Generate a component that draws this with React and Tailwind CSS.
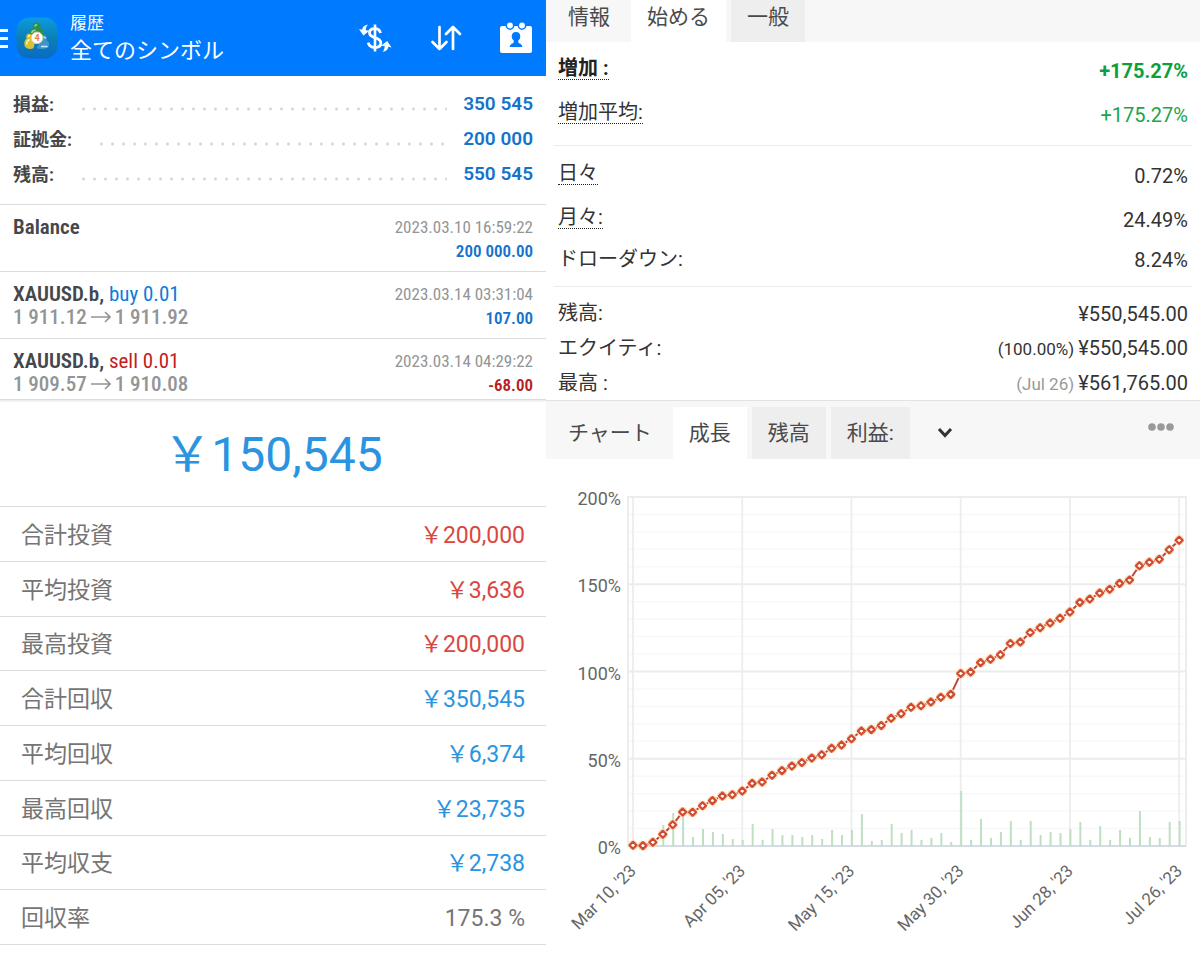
import { useState } from 'react';
import clsx from 'clsx';

const summary = [
    { label: '損益:', value: '350 545' },
    { label: '証拠金:', value: '200 000' },
    { label: '残高:', value: '550 545' },
];

const deals = [
    { id: 1, symbol: 'Balance', time: '2023.03.10 16:59:22', profit: '200 000.00' },
    { id: 2, symbol: 'XAUUSD.b,', side: 'buy', lot: '0.01', open: '1 911.12', close: '1 911.92', time: '2023.03.14 03:31:04', profit: '107.00' },
    { id: 3, symbol: 'XAUUSD.b,', side: 'sell', lot: '0.01', open: '1 909.57', close: '1 910.08', time: '2023.03.14 04:29:22', profit: '-68.00' },
];

// Full-width yen sign, the totals are set in the Japanese font's glyph
const YEN = '\uffe5';

const totals = [
    { label: '合計投資', value: `${YEN}200,000`, color: 'text-[#d9483f]' },
    { label: '平均投資', value: `${YEN}3,636`, color: 'text-[#d9483f]' },
    { label: '最高投資', value: `${YEN}200,000`, color: 'text-[#d9483f]' },
    { label: '合計回収', value: `${YEN}350,545`, color: 'text-[#2b94e1]' },
    { label: '平均回収', value: `${YEN}6,374`, color: 'text-[#2b94e1]' },
    { label: '最高回収', value: `${YEN}23,735`, color: 'text-[#2b94e1]' },
    { label: '平均収支', value: `${YEN}2,738`, color: 'text-[#2b94e1]' },
    { label: '回収率', value: '175.3 %', color: 'text-[#757575]' },
];

// Cumulative growth in percent, one value per trading day
const growth = [
    0.4, 0.2, 2.1, 6.7, 12.2, 19.5, 19.3, 23.1, 26, 28.7, 29.4, 31.5, 35.9, 36.7,
    40.5, 43.2, 45.8, 47.8, 50.4, 52.3, 56, 57.9, 61.5, 65.9, 66.7, 69, 73.2, 75.8,
    79.5, 80.4, 82.5, 85.2, 86.9, 98.8, 99.7, 105.1, 107, 109.6, 116, 116.9, 122.3,
    125.1, 127.8, 130.5, 134.1, 139.6, 141.5, 145, 147.1, 150.5, 152.4, 160.6,
    162.6, 164.3, 169.8, 175.2,
];

// Height of the daily profit bars
const daily = [
    0, 0, 0, 21, 33, 33, 9, 17, 14, 12, 7, 6, 22, 6, 17, 11, 11, 9, 11, 7, 16, 11,
    16, 32, 5, 6, 22, 13, 16, 6, 8, 13, 4, 55, 6, 27, 8, 14, 25, 6, 25, 11, 14, 13,
    17, 24, 6, 20, 6, 16, 8, 35, 9, 8, 24, 25,
];

const dates = ["Mar 10, '23", "Apr 05, '23", "May 15, '23", "May 30, '23", "Jun 28, '23", "Jul 26, '23"];

const CHART = { left: 82, right: 640, top: 38, bottom: 387, first: 87, step: 9.93 };

function AppLogo() {
    return (
        <svg viewBox="0 0 42 42" className="size-[42px] shrink-0" aria-hidden="true">
            <defs>
                <linearGradient id="logo-bg" x1="0" y1="0" x2="0" y2="1">
                    <stop offset="0" stopColor="#0c9be0" />
                    <stop offset="0.5" stopColor="#0a80b4" />
                    <stop offset="1" stopColor="#0a6ac6" />
                </linearGradient>
            </defs>
            <rect x="0.5" y="0.5" width="41" height="41" rx="13" fill="url(#logo-bg)" />
            <path d="M13.500 18c-.5-3.500 1-5.800 3.800-6.500a4 4 0 1 1 7 0c3 .7 4.300 3.200 3.800 6.500l-7 2z" fill="#2f8f4a" />
            <path d="M18.700 9.500c.3-1.200 1.200-1.800 2.400-1.800M15.500 16c.6-1.800 2-2.700 4-2.700" fill="none" stroke="#9fdc8d" strokeWidth="1.400" />
            <path d="M8.800 29.500c-1-3.500-.4-6.500 1.800-8-1-2.700.2-4.800 2.700-4.800 2.200 0 3.600 1.800 3.200 4l2.500 5-1.500 5.500c-3 1.500-7.200.8-8.700-1.700z" fill="#d6c233" />
            <path d="M10.800 27.500c-.2-2.300.8-4.200 2.800-5M12.500 20c0-1.200.5-1.800 1.400-1.800" fill="none" stroke="#fff3a0" strokeWidth="1.500" />
            <path d="M20.500 31l4-6.500c-.5-4 1.200-6.700 4-6.200 2.300.5 3 2.900 2 5 2.500 1.200 3.300 4 1.800 7.200-3.600 1.700-8 1.800-11.800.5z" fill="#3d94d0" />
            <path d="M25 29.500h6.500M27.500 20.500c1-.5 1.800 0 1.800 1" fill="none" stroke="#c7ecff" strokeWidth="1.500" />
            <circle cx="21" cy="20.800" r="5.800" fill="#fff" stroke="#d8d3a0" strokeWidth="1" />
            <text x="21" y="24" textAnchor="middle" fontSize="9" fontWeight="700" fill="#ea7c4a" fontFamily="Roboto, sans-serif">4</text>
        </svg>
    );
}

function CurrencyIcon() {
    return (
        <svg viewBox="0 0 34 30" className="h-[30px] w-[34px]" fill="none" stroke="#fff" aria-hidden="true">
            <path d="M22.500 10c-.8-3-3-4.300-5.700-4.300-3.200 0-5.300 1.600-5.300 4.100 0 2.900 2.300 3.900 5.300 4.900 3.400 1.100 6 2.300 6 5.300s-2.500 4.500-6 4.500c-3.400 0-5.700-1.500-6.600-4.800" strokeWidth="2.800" />
            <path d="M17 1.500v27" strokeWidth="2.600" />
            <path d="M10 1.500C6.500 2 4.500 4 4.100 6.700L1 6l4.300 6.500 6.200-4.800-3.700-.5C7.800 5 8.500 3 10 1.500z" fill="#fff" stroke="none" />
            <path d="M24.500 29c3.500-.5 5.500-2.500 5.900-5.200l3.100.7-4.300-6.500-6.200 4.800 3.700.5c0 2.200-.7 4.200-2.200 5.700z" fill="#fff" stroke="none" />
        </svg>
    );
}

function SortIcon() {
    return (
        <svg viewBox="0 0 32 28" className="h-7 w-8" fill="none" stroke="#fff" strokeWidth="2.700" strokeLinecap="round" strokeLinejoin="round" aria-hidden="true">
            <path d="M9.500 3v22M2.500 18l7 7 7-7" />
            <path d="M23 25V3M16 10l7-7 7 7" />
        </svg>
    );
}

function CalendarIcon() {
    return (
        <svg viewBox="0 0 32 32" className="size-8" aria-hidden="true">
            <rect x="0" y="4" width="32" height="27" rx="2" fill="#fff" />
            <circle cx="10" cy="3.500" r="4.400" fill="#007aff" />
            <circle cx="22" cy="3.500" r="4.400" fill="#007aff" />
            <circle cx="10" cy="3.500" r="2.900" fill="#fff" />
            <circle cx="22" cy="3.500" r="2.900" fill="#fff" />
            <path d="M16 10c3 0 4.300 2 4.300 4.300 0 2.200-1 3.500-2 4.300v1.600c0 1.200 4 1.500 4 4.800H9.700c0-3.300 4-3.600 4-4.800v-1.600c-1-.8-2-2.100-2-4.300C11.700 12 13 10 16 10z" fill="#007aff" />
        </svg>
    );
}

function HistoryHeader() {
    return (
        <header className="flex h-19 items-center bg-[#007aff] pr-[14px] text-white">
            <button type="button" aria-label="メニュー" className="flex w-2 shrink-0 flex-col gap-[5px]">
                <span className="h-[3px] bg-white" />
                <span className="h-[3px] bg-white" />
                <span className="h-[3px] bg-white" />
            </button>
            <div className="ml-2">
                <AppLogo />
            </div>
            <div className="ml-3 flex-1 pt-[2px]">
                <p className="text-[17px] leading-6">履歴</p>
                <h1 className="text-[22px] leading-8">全てのシンボル</h1>
            </div>
            <div className="flex items-center gap-[38px]">
                <button type="button" aria-label="通貨"><CurrencyIcon /></button>
                <button type="button" aria-label="並べ替え"><SortIcon /></button>
                <button type="button" aria-label="期間"><CalendarIcon /></button>
            </div>
        </header>
    );
}

function DealRow({ deal }) {
    const isLoss = deal.profit.startsWith('-');

    return (
        <li className="flex justify-between border-t border-[#dcdcdc] px-[13px] pt-[10px] pb-2 last:pb-[2px] font-['Roboto_Condensed','Liberation_Sans_Narrow',Roboto,sans-serif]">
            <div>
                <p className="text-[21px] leading-6 font-semibold text-[#45474b]">
                    {deal.symbol}
                    {deal.side && (
                        <span className={clsx('font-normal', deal.side === 'buy' ? 'text-[#0d7bd8]' : 'text-[#c4201f]')}>
                            {' '}{deal.side} {deal.lot}
                        </span>
                    )}
                </p>
                {deal.open && (
                    <p className="flex items-center gap-1 text-[21px] leading-[22px] font-medium text-[#929496]">
                        {deal.open}
                        <svg viewBox="0 0 20 12" className="h-3 w-5" fill="none" stroke="currentColor" strokeWidth="1.600" aria-hidden="true">
                            <path d="M0 6h19M14 1l5 5-5 5" />
                        </svg>
                        {deal.close}
                    </p>
                )}
            </div>
            <div className="text-right text-[17px] leading-6">
                <p className="text-[#929496]">{deal.time}</p>
                <p className={clsx('font-semibold', isLoss ? 'text-[#b82025]' : 'text-[#1573cc]')}>{deal.profit}</p>
            </div>
        </li>
    );
}

function TabBar({ title, tabs, active, onSelect, className, children }) {
    return (
        <nav className={clsx('flex bg-[#f7f7f7] text-[21px] text-[#4a4a4a]', className)}>
            <h2 className="flex items-center pt-[2px] pr-[21px] pl-[22px]">{title}</h2>
            <div className="flex gap-[5px]">
                {tabs.map((tab) => (
                    <TabButton key={tab} selected={tab === active} onClick={() => onSelect(tab)} cut={!children}>
                        {tab}
                    </TabButton>
                ))}
            </div>
            {children}
        </nav>
    );
}

function TabButton({ selected, cut, onClick, children }) {
    return (
        <button
            type="button"
            onClick={onClick}
            aria-pressed={selected}
            className={clsx('px-4 pt-[2px]', selected ? 'bg-white' : 'bg-[#eeeeee]', cut && '-mb-2 pb-2')}
        >
            {children}
        </button>
    );
}

function StatRow({ label, value, note, noteColor, underline, strong, className }) {
    return (
        <div className={clsx('flex items-center justify-between text-[20px] leading-6', className)}>
            <dt className={clsx(underline && 'mb-1 border-b border-dotted border-[#222] leading-[22px]', strong && 'font-bold text-[#222]')}>
                {label}
            </dt>
            <dd className="pt-[2px]">
                {note && <span className={clsx('text-[17px]', noteColor)}>{note} </span>}
                {value}
            </dd>
        </div>
    );
}

function GrowthChart() {
    const { left, right, top, bottom, first, step } = CHART;
    const yOf = (percent) => bottom - (percent * (bottom - top)) / 200;
    const xOf = (index) => first + index * step;
    const minor = Array.from({ length: 20 }, (_, i) => i * 10).filter((p) => p % 50 !== 0);

    return (
        <svg viewBox="0 0 654 500" className="block w-full" role="img" aria-label="成長" fontFamily="Roboto, sans-serif" fill="#666">
            {minor.map((p) => (
                <line key={p} x1={left} x2={right} y1={yOf(p)} y2={yOf(p)} stroke="#f8f8f8" strokeWidth="1.500" />
            ))}
            {[50, 100, 150].map((p) => (
                <line key={p} x1={left} x2={right} y1={yOf(p)} y2={yOf(p)} stroke="#ececec" strokeWidth="1.800" />
            ))}
            {dates.map((date, i) => (
                <line key={date} x1={xOf(i * 11)} x2={xOf(i * 11)} y1={top} y2={bottom} stroke="#ededed" strokeWidth="1.800" />
            ))}
            <rect x={left} y={top} width={right - left} height={bottom - top} fill="none" stroke="#ececec" strokeWidth="1.800" />

            {daily.map((h, i) => (
                h > 0 && <line key={i} x1={xOf(i) + 0.5} x2={xOf(i) + 0.5} y1={bottom - h} y2={bottom} stroke="#bfdfc3" strokeWidth="2" />
            ))}
            <line x1={left} x2={right} y1={bottom} y2={bottom} stroke="#c9d6dc" strokeWidth="1.500" />

            <polyline points={growth.map((p, i) => `${xOf(i)},${yOf(p)}`).join(' ')} fill="none" stroke="#c0463a" strokeWidth="2" />
            {growth.map((p, i) => (
                <g key={i}>
                    <circle cx={xOf(i)} cy={yOf(p)} r="5" fill="#fbdcae" />
                    <path
                        d={`M${xOf(i)} ${yOf(p) - 3.5}l3.500 3.500-3.500 3.500-3.500-3.500z`}
                        fill="#fff"
                        stroke="#d14a34"
                        strokeWidth="2.200"
                        strokeLinejoin="round"
                    />
                </g>
            ))}

            {[0, 50, 100, 150, 200].map((p) => (
                <text key={p} x="75" y={yOf(p) + 8} textAnchor="end" fontSize="18">{p}%</text>
            ))}
            {dates.map((date, i) => (
                <text key={date} transform={`translate(${xOf(i * 11) + 4} ${bottom + 26}) rotate(-45)`} textAnchor="end" fontSize="17">
                    {date}
                </text>
            ))}
        </svg>
    );
}

export default function App() {
    const [infoTab, setInfoTab] = useState('始める');
    const [chartTab, setChartTab] = useState('成長');

    return (
        <div className="grid min-h-screen grid-cols-[546fr_654fr] overflow-hidden bg-white font-[Roboto,'Noto_Sans_CJK_JP',sans-serif]">
            <div className="flex flex-col pb-[15px]">
                <section>
                    <HistoryHeader />
                    <dl className="px-[13px] pt-[11px] pb-3">
                        {summary.map((row) => (
                            <div key={row.label} className="flex h-[35px] items-center">
                                <dt className="text-[18px] font-bold text-[#45474b]">{row.label}</dt>
                                <span className="mt-2 mr-4 ml-6 h-1 flex-1 bg-[radial-gradient(circle,#d8d8d8_1px,transparent_2px)] bg-[length:11px_4px] bg-repeat-x" />
                                <dd className="text-[19px] font-semibold text-[#1573cc]">{row.value}</dd>
                            </div>
                        ))}
                    </dl>
                    <ul>
                        {deals.map((deal) => (
                            <DealRow key={deal.id} deal={deal} />
                        ))}
                    </ul>
                </section>

                <section className="flex flex-1 flex-col border-t border-[#dcdcdc] shadow-[inset_0_3px_3px_-2px_#e4e4e4]">
                    <p className="flex h-[106px] items-center justify-center pt-1 text-[48px] text-[#2b94e1]">{YEN}150,545</p>
                    <dl className="grid flex-1 auto-rows-fr border-b border-[#dcdcdc]">
                        {totals.map((row) => (
                            <div key={row.label} className="flex items-center justify-between border-t border-[#dcdcdc] px-[21px] pt-1">
                                <dt className="text-[23px] leading-8 text-[#757575]">{row.label}</dt>
                                <dd className={clsx('text-[23px] leading-8', row.color)}>{row.value}</dd>
                            </div>
                        ))}
                    </dl>
                </section>
            </div>

            <div>
                <TabBar title="情報" tabs={['始める', '一般']} active={infoTab} onSelect={setInfoTab} className="h-[42px] pb-2" />

                <div className="px-2 text-[#333]">
                    <dl className="px-1 pt-[6px] pb-[9px]">
                        <StatRow label="増加 :" value="+175.27%" underline strong className="h-11 font-bold text-[#0d9f3f]" />
                        <StatRow label="増加平均:" value={<span className="text-[#1ba54a]">+175.27%</span>} underline className="h-11" />
                    </dl>
                    <dl className="border-t border-[#ebebeb] px-1 pt-[7px] pb-[9px]">
                        <StatRow label="日々" value="0.72%" underline className="h-11" />
                        <StatRow label="月々:" value="24.49%" underline className="h-11" />
                        <StatRow label="ドローダウン:" value="8.24%" className="h-9" />
                    </dl>
                    <dl className="border-t border-[#ebebeb] px-1 pt-2">
                        <StatRow label="残高:" value="¥550,545.00" className="h-[35px]" />
                        <StatRow label="エクイティ:" value="¥550,545.00" note="(100.00%)" className="h-[35px]" />
                        <StatRow label="最高 :" value="¥561,765.00" note="(Jul 26)" noteColor="text-[#999]" className="h-[35px]" />
                    </dl>
                </div>

                <TabBar
                    title="チャート"
                    tabs={['成長', '残高', '利益:']}
                    active={chartTab}
                    onSelect={setChartTab}
                    className="h-[59px] border-t border-[#e2e2e2] pt-[6px]"
                >
                    <button type="button" aria-label="その他のタブ" className="px-[27px]">
                        <svg viewBox="0 0 16 12" className="h-3 w-4" fill="none" stroke="#333" strokeWidth="3" aria-hidden="true">
                            <path d="M2 2l6 6.500L14 2" />
                        </svg>
                    </button>
                    <button type="button" aria-label="メニュー" className="mr-[26px] mb-3 ml-auto">
                        <svg viewBox="0 0 26 8" className="h-2 w-[26px]" fill="#999" aria-hidden="true">
                            <circle cx="4" cy="4" r="3.800" />
                            <circle cx="13" cy="4" r="3.800" />
                            <circle cx="22" cy="4" r="3.800" />
                        </svg>
                    </button>
                </TabBar>
                <GrowthChart />
            </div>
        </div>
    );
}
